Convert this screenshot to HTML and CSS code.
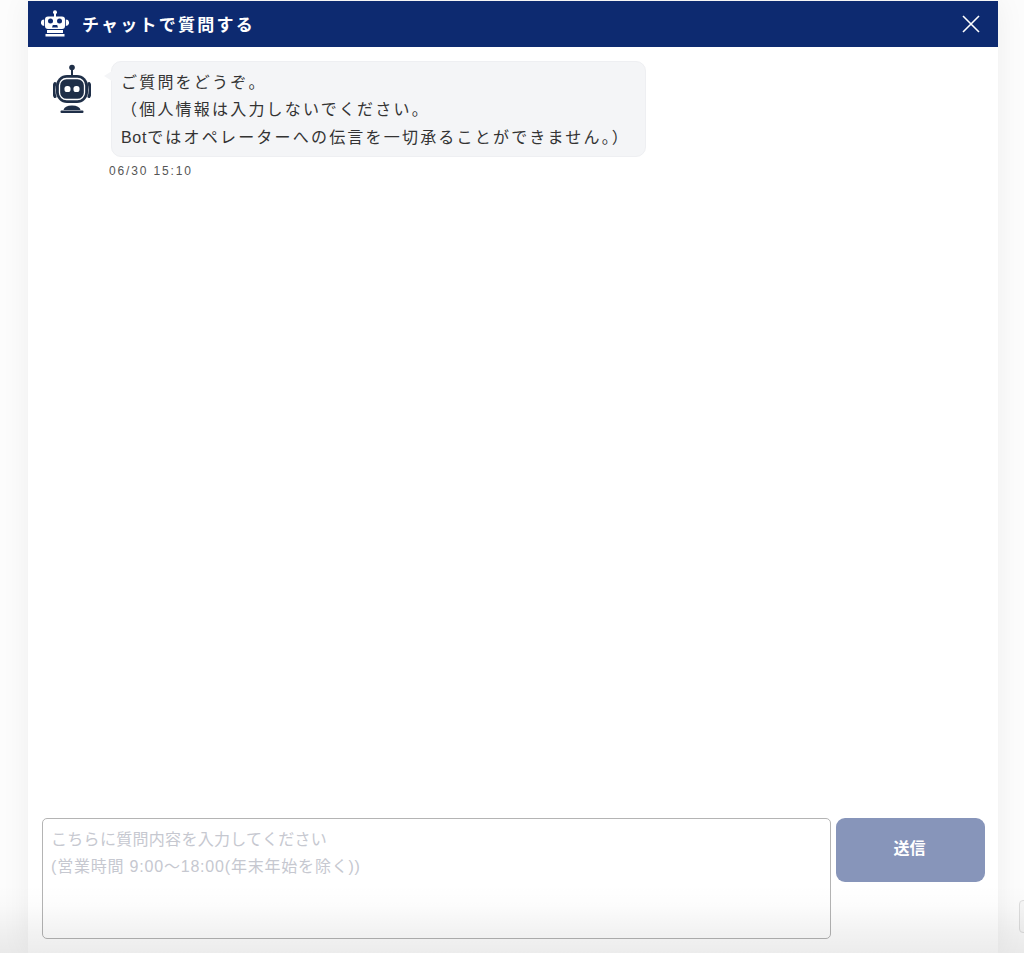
FILE: index.html
```html
<!DOCTYPE html>
<html lang="ja">
<head>
<meta charset="utf-8">
<title>チャットで質問する</title>
<link rel="stylesheet" href="styles.css">
</head>
<body>
<div class="page">
  <main class="panel">
    <header class="head">
      <div class="head-title">
        <svg class="head-icon" viewBox="0 0 28 28">
          <circle cx="14" cy="2.3" r="2" fill="#fff"/>
          <rect x="13" y="3" width="2" height="4" fill="#fff"/>
          <rect x="4" y="6.5" width="20" height="12.5" rx="3" fill="#fff"/>
          <path d="M3.2 9.5A3 3 0 0 0 3.2 16ZM24.8 9.5A3 3 0 0 1 24.8 16Z" fill="#fff"/>
          <circle cx="9.5" cy="11" r="2.5" fill="#0d2a70"/>
          <circle cx="18.5" cy="11" r="2.5" fill="#0d2a70"/>
          <path d="M11 17.5 11.8 15H16.2L17 17.5Z" fill="#0d2a70"/>
          <rect x="6" y="20" width="16" height="3" fill="#fff"/>
          <rect x="4.5" y="24" width="19" height="2.5" fill="#fff"/>
        </svg>
        <h1 class="title">チャットで質問する</h1>
      </div>
      <button class="close" aria-label="閉じる">
        <svg viewBox="0 0 18 18" class="close-icon"><path d="M1 1 17 17M17 1 1 17" stroke="#fff" stroke-width="1.6" fill="none"/></svg>
      </button>
    </header>

    <section class="log">
      <div class="msg">
        <svg class="avatar" viewBox="0 0 38 50">
          <circle cx="19" cy="3.5" r="2.8" fill="#1f2f48"/>
          <rect x="18" y="5" width="2" height="8" fill="#1f2f48"/>
          <path d="M2 19.5C0.6 22 0.6 30 2 32.5" fill="none" stroke="#1f2f48" stroke-width="3" stroke-linecap="round"/>
          <path d="M36 19.5C37.4 22 37.4 30 36 32.5" fill="none" stroke="#1f2f48" stroke-width="3" stroke-linecap="round"/>
          <rect x="3" y="11" width="32" height="28" rx="11" fill="#1f2f48"/>
          <rect x="6.5" y="14.5" width="25" height="21" rx="7" fill="none" stroke="#fff" stroke-width="1.3"/>
          <rect x="9" y="18" width="20" height="14.5" rx="4.5" fill="#1f2f48"/>
          <rect x="11.5" y="22" width="6" height="6" rx="2.6" fill="#fff"/>
          <rect x="20.5" y="22" width="6" height="6" rx="2.6" fill="#fff"/>
          <path d="M10.5 46q1-4.5 8.5-4.5t8.5 4.5z" fill="#1f2f48"/>
          <rect x="7.5" y="46.5" width="23" height="2.5" rx="1" fill="#1f2f48"/>
        </svg>
        <div class="msg-body">
          <div class="bubble">
            <p class="line">ご質問をどうぞ。</p>
            <p class="line">（個人情報は入力しないでください。</p>
            <p class="line"><span class="latin">Bot</span>ではオペレーターへの伝言を一切承ることができません。）</p>
          </div>
          <time class="stamp">06/30 15:10</time>
        </div>
      </div>
    </section>

    <footer class="composer">
      <div class="input" role="textbox">
        <p class="hint">こちらに質問内容を入力してください</p>
        <p class="hint hint-wide">(営業時間 9:00〜18:00(年末年始を除く))</p>
      </div>
      <button class="send">送信</button>
    </footer>
  </main>
</div>
<div class="side-tab"></div>
<div class="fade"></div>
</body>
</html>
```

FILE: styles.css
```css
* { box-sizing: border-box; }
html, body { margin: 0; padding: 0; height: 953px; overflow: hidden; }
body {
  background: #fcfcfc;
  font-family: "Liberation Sans", "Noto Sans CJK JP", sans-serif;
  color: #333;
  position: relative;
}
.page { height: 953px; padding: 1px 26px 0 28px; }
.panel {
  height: 952px;
  background: #fff;
  display: flex;
  flex-direction: column;
  box-shadow: 0 0 28px rgba(0,0,0,0.06);
}
.head {
  height: 46px;
  flex: none;
  background: #0d2a70;
  display: flex;
  align-items: center;
  justify-content: space-between;
  padding: 0 18px 0 12px;
}
.head-title { display: flex; align-items: center; gap: 13px; }
.head-icon { width: 28px; height: 28px; display: block; margin-left: 1px; }
.title {
  margin: 0;
  padding-bottom: 2px;
  font-size: 17px;
  font-weight: 700;
  letter-spacing: 2.25px;
  color: #fff;
}
.close { padding: 0; border: 0; background: none; display: block; width: 18px; height: 18px; }
.close-icon { display: block; width: 18px; height: 18px; }
.log { flex: 1; padding: 14px 0 0 25px; }
.msg { display: flex; align-items: flex-start; gap: 21px; }
.avatar { width: 38px; height: 50px; margin-top: 3px; flex: none; }
.msg-body { display: flex; flex-direction: column; align-items: flex-start; }
.bubble {
  position: relative;
  background: #f4f5f7;
  border: 1px solid #eeeff2;
  border-radius: 10px;
  padding: 7px 15px 5px 9px;
  margin-left: -1px;
  font-size: 16px;
  line-height: 27.3px;
  letter-spacing: 2.2px;
}
.latin { letter-spacing: 0.7px; }
.bubble::before {
  content: "";
  position: absolute;
  left: -8px;
  top: 9px;
  border-style: solid;
  border-width: 5px 8px 5px 0;
  border-color: transparent #f4f5f7 transparent transparent;
}
.line { margin: 0; }
.stamp {
  margin: 7px 0 0 -3px;
  font-size: 12px;
  line-height: 14px;
  letter-spacing: 1.85px;
  color: #555;
}
.composer {
  flex: none;
  display: flex;
  align-items: flex-start;
  gap: 5px;
  padding: 0 13px 14px 14px;
}
.input {
  width: 789px;
  height: 121px;
  border: 1px solid #b4b4b4;
  border-radius: 5px;
  background: #fff;
  padding: 7px 8px;
}
.hint { margin: 0; font-size: 16px; line-height: 27px; letter-spacing: 0.3px; color: #c6c8d0; }
.hint-wide { letter-spacing: 0.8px; }
.send {
  width: 149px;
  height: 64px;
  border: 0;
  border-radius: 9px;
  background: #8795ba;
  color: #fff;
  font-family: inherit;
  font-size: 16px;
  font-weight: 700;
  padding: 0 2px 6px 0;
}
.side-tab {
  position: absolute;
  left: 1019px;
  top: 900px;
  width: 12px;
  height: 33px;
  border: 1px solid #ddd;
  border-radius: 4px;
  background: #f6f6f6;
}
.fade {
  position: absolute;
  left: 0;
  right: 0;
  top: 885px;
  height: 68px;
  background: linear-gradient(rgba(0,0,0,0), rgba(0,0,0,0.012) 30%, rgba(0,0,0,0.05) 70%, rgba(0,0,0,0.075));
  pointer-events: none;
}
```
